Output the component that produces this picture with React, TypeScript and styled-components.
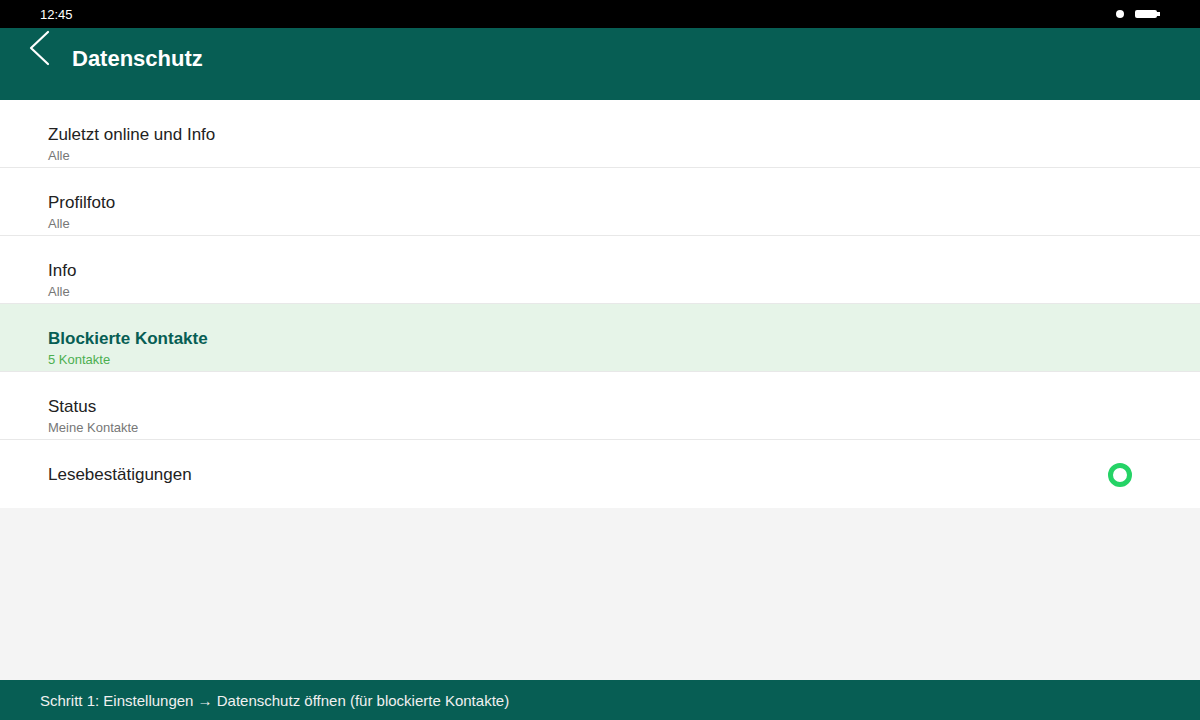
import styled, { createGlobalStyle } from "styled-components";

const GlobalStyle = createGlobalStyle`
  html, body {
    margin: 0;
    padding: 0;
    background: #f4f4f4;
  }
  body {
    font-family: "Liberation Sans", Arial, Helvetica, sans-serif;
  }
`;

type Item = {
  title: string;
  sub?: string;
  active?: boolean;
  toggle?: boolean;
};

const items: Item[] = [
  { title: "Zuletzt online und Info", sub: "Alle" },
  { title: "Profilfoto", sub: "Alle" },
  { title: "Info", sub: "Alle" },
  { title: "Blockierte Kontakte", sub: "5 Kontakte", active: true },
  { title: "Status", sub: "Meine Kontakte" },
  { title: "Lesebestätigungen", toggle: true },
];

const App = () => {
  return (
    <>
      <GlobalStyle />
      <Screen>
        <StatusBar>
          <Clock>12:45</Clock>
          <StatusIcons>
            <Dot />
            <Battery />
          </StatusIcons>
        </StatusBar>

        <Header>
          <BackButton aria-label="Zurück">
            <svg width="22" height="36" viewBox="0 0 22 36" fill="none">
              <path
                d="M20 2 L3 18 L20 34"
                stroke="#fff"
                strokeWidth="2.2"
                strokeLinecap="round"
                strokeLinejoin="round"
              />
            </svg>
          </BackButton>
          <Title>Datenschutz</Title>
        </Header>

        <List>
          {items.map((item) => (
            <Row key={item.title} $active={item.active} $single={!item.sub}>
              <RowText>
                <RowTitle $active={item.active}>{item.title}</RowTitle>
                {item.sub && <RowSub $active={item.active}>{item.sub}</RowSub>}
              </RowText>
              {item.toggle && <Ring />}
            </Row>
          ))}
        </List>

        <Filler />

        <Footer>
          Schritt 1: Einstellungen → Datenschutz öffnen (für blockierte Kontakte)
        </Footer>
      </Screen>
    </>
  );
};

export default App;

const Screen = styled.div`
  display: flex;
  flex-direction: column;
  width: 100%;
  height: 720px;
  background: #f4f4f4;
  overflow: hidden;
`;

const StatusBar = styled.div`
  display: flex;
  align-items: center;
  justify-content: space-between;
  height: 28px;
  padding: 0 40px;
  background: #000;
  color: #fff;
  box-sizing: border-box;
`;

const Clock = styled.span`
  font-size: 13px;
`;

const StatusIcons = styled.div`
  display: flex;
  align-items: center;
  gap: 11px;
`;

const Dot = styled.span`
  width: 8px;
  height: 8px;
  border-radius: 50%;
  background: #fff;
`;

const Battery = styled.span`
  position: relative;
  width: 22px;
  height: 8px;
  border-radius: 2px;
  background: #fff;
  margin-right: 3px;

  &::after {
    content: "";
    position: absolute;
    right: -3px;
    top: 2px;
    width: 3px;
    height: 4px;
    background: #fff;
  }
`;

const Header = styled.header`
  display: flex;
  align-items: flex-start;
  height: 72px;
  padding-left: 28px;
  background: #075e54;
  box-sizing: border-box;
`;

const BackButton = styled.button`
  display: flex;
  margin-top: 2px;
  padding: 0;
  border: none;
  background: none;
  cursor: pointer;
`;

const Title = styled.h1`
  margin: 18px 0 0 22px;
  font-size: 22px;
  line-height: 26px;
  font-weight: bold;
  color: #fff;
`;

const List = styled.div`
  display: flex;
  flex-direction: column;
  background: #fff;
`;

const Row = styled.div<{ $active?: boolean; $single?: boolean }>`
  display: flex;
  align-items: ${(p) => (p.$single ? "center" : "flex-start")};
  justify-content: space-between;
  height: 68px;
  padding: ${(p) => (p.$single ? "1px 68px 0 48px" : "25px 68px 0 48px")};
  box-sizing: border-box;
  background: ${(p) => (p.$active ? "#e6f4e8" : "#fff")};
  border-bottom: 1px solid #e8e8e8;

  &:last-child {
    border-bottom: none;
  }
`;

const RowText = styled.div`
  display: flex;
  flex-direction: column;
`;

const RowTitle = styled.span<{ $active?: boolean }>`
  font-size: 17px;
  line-height: 20px;
  font-weight: ${(p) => (p.$active ? "bold" : "normal")};
  color: ${(p) => (p.$active ? "#075e54" : "#222")};
`;

const RowSub = styled.span<{ $active?: boolean }>`
  margin-top: 3px;
  font-size: 13px;
  line-height: 16px;
  color: ${(p) => (p.$active ? "#4caf50" : "#777")};
`;

const Ring = styled.span`
  width: 24px;
  height: 24px;
  border: 5px solid #25d366;
  border-radius: 50%;
  box-sizing: border-box;
`;

const Filler = styled.div`
  flex: 1;
  background: #f4f4f4;
`;

const Footer = styled.footer`
  display: flex;
  align-items: center;
  height: 40px;
  padding: 0 40px;
  background: #075e54;
  color: #f0f0f0;
  font-size: 15px;
`;
